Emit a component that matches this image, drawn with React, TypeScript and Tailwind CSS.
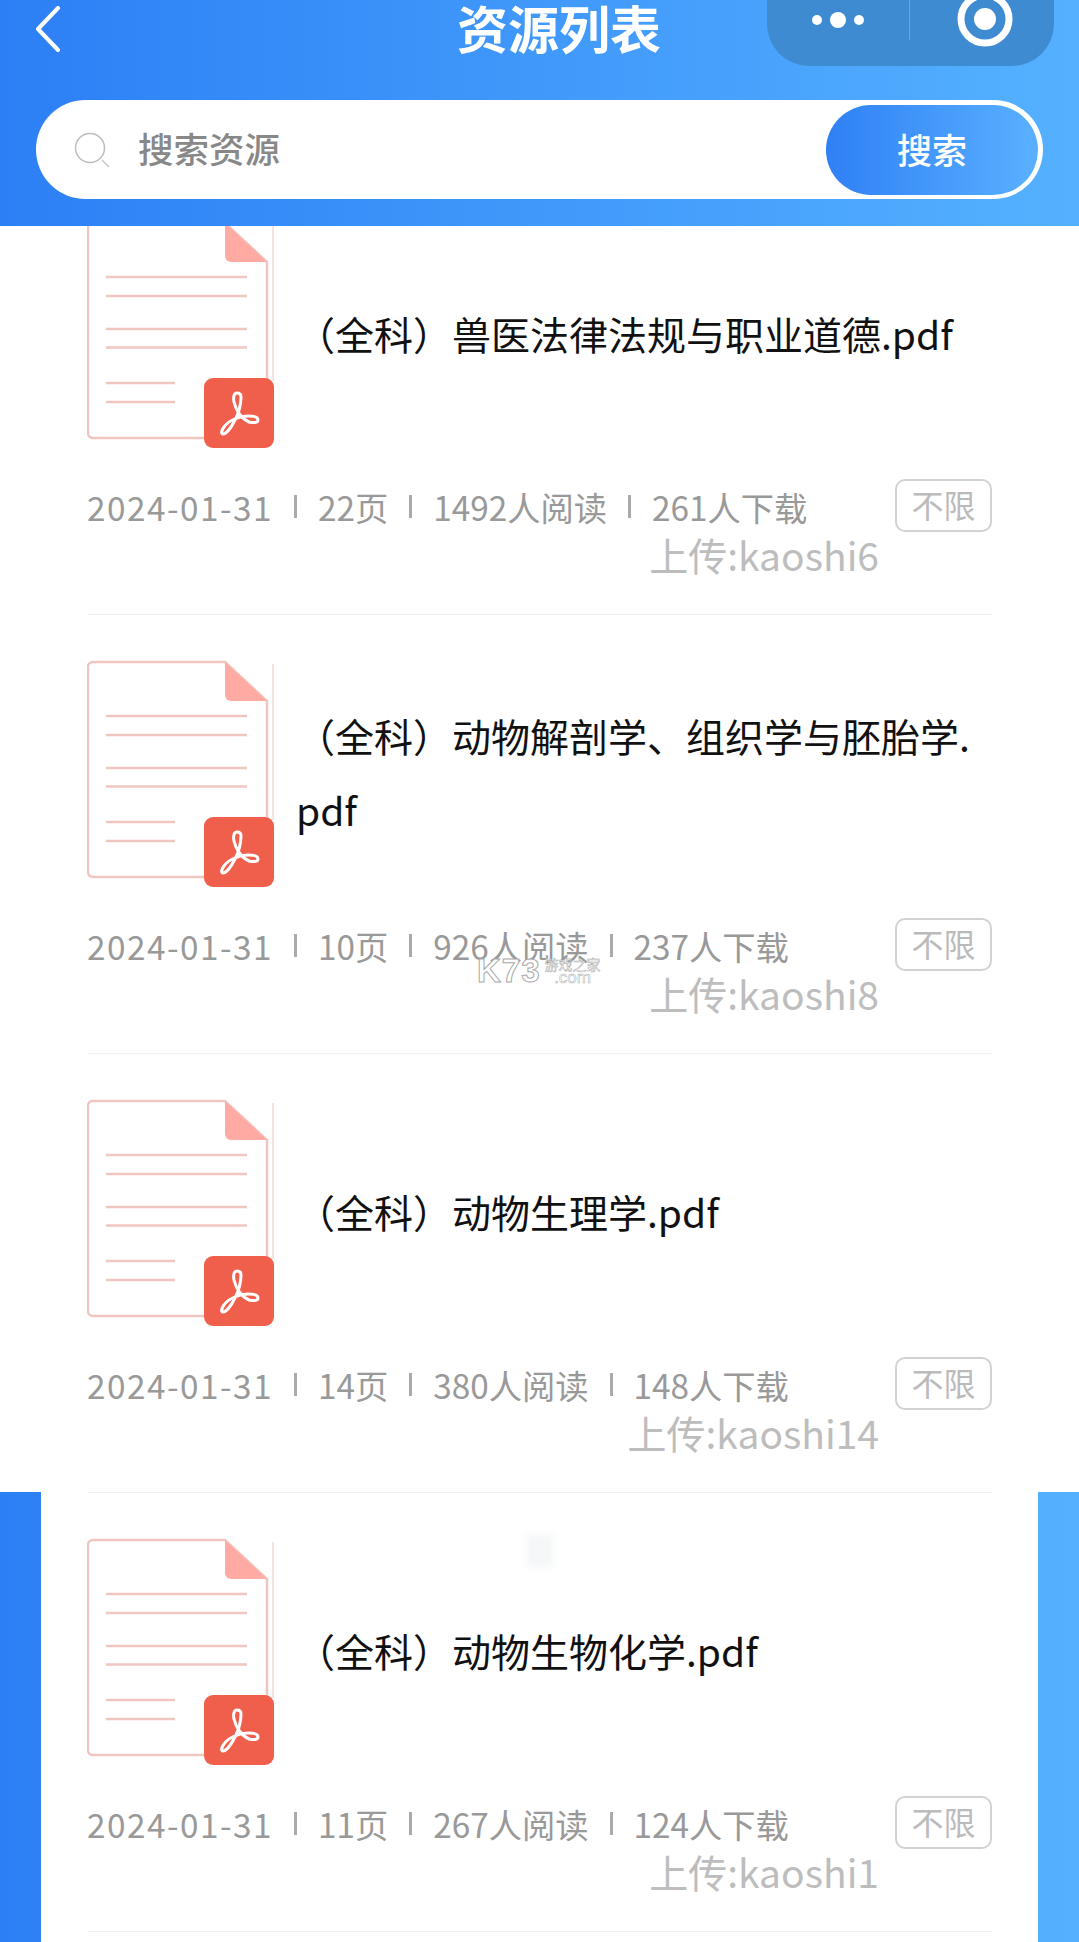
const FONT = "font-['Noto_Sans_CJK_SC','Noto_Sans',sans-serif]"

const resources = [
  { title: '（全科）兽医法律法规与职业道德.pdf', date: '2024-01-31', pages: '22页', reads: '1492人阅读', downloads: '261人下载', user: '上传:kaoshi6' },
  { title: '（全科）动物解剖学、组织学与胚胎学.pdf', date: '2024-01-31', pages: '10页', reads: '926人阅读', downloads: '237人下载', user: '上传:kaoshi8' },
  { title: '（全科）动物生理学.pdf', date: '2024-01-31', pages: '14页', reads: '380人阅读', downloads: '148人下载', user: '上传:kaoshi14' },
  { title: '（全科）动物生物化学.pdf', date: '2024-01-31', pages: '11页', reads: '267人阅读', downloads: '124人下载', user: '上传:kaoshi1' },
]

function PdfIcon() {
  return (
    <svg width="187" height="227" viewBox="0 0 187 227" fill="none" className="shrink-0">
      <path d="M6 2H138L180 41V217H6a5 5 0 0 1-5-5V7a5 5 0 0 1 5-5Z" stroke="#efc6bf" strokeWidth="2.5" fill="#fff" />
      <path d="M138 2L180 41H144a6 6 0 0 1-6-6Z" fill="#ffaaa3" />
      <path d="M186 4V160" stroke="#f3d9d4" strokeWidth="1.5" />
      <g stroke="#efc6c0" strokeWidth="2.5">
        <path d="M19 56H160" />
        <path d="M19 75H160" />
        <path d="M19 108H160" />
        <path d="M19 126.500H160" />
        <path d="M19 162H88" />
        <path d="M19 181H88" />
      </g>
      <rect x="117" y="157" width="70" height="70" rx="9" fill="#ef5f4c" />
      <path
        d="M150 172c-3 0-4 4-3 9c2 9 8 17 15 20c4 1 9 1 9-2c0-3-5-4-10-4c-9 0-20 5-24 11c-3 4-3 7-1 7c3 0 8-6 12-14c4-8 6-18 6-23c0-3-2-4-4-4Z"
        stroke="#fff"
        strokeWidth="3"
        strokeLinejoin="round"
      />
    </svg>
  )
}

function Sep() {
  return <span className="w-[3px] h-[23px] bg-[#aaa]" />
}

function ResourceItem({ item }: { item: (typeof resources)[number] }) {
  return (
    <div className="h-[439px] pt-[45px] border-b border-[#f0f0f0]">
      <div className="flex items-center">
        <PdfIcon />
        <div className="ml-[22px] -mt-[4px] flex-1 text-[39px] leading-[74px] text-[#111] break-all">{item.title}</div>
      </div>
      <div className="mt-[31px] flex items-center justify-between">
        <div className="mt-[2px] flex items-center gap-[21px] text-[33.300px] leading-[44px] text-[#999]">
          <span className="tracking-[1.500px]">{item.date}</span>
          <Sep />
          <span>{item.pages}</span>
          <Sep />
          <span>{item.reads}</span>
          <Sep />
          <span>{item.downloads}</span>
        </div>
        <div className="w-[97px] h-[53px] pb-[3px] flex items-center justify-center rounded-[10px] border-2 border-[#d2d2d2] text-[32px] text-[#bbb]">
          不限
        </div>
      </div>
      <div className="mt-[2px] pr-[113px] text-right text-[39px] leading-[40px] text-[#bdbdbd]">{item.user}</div>
    </div>
  )
}

function Header() {
  return (
    <header className="relative z-10 h-[226px] shrink-0 px-[36px] pt-[100px]">
      <svg width="26" height="46" viewBox="0 0 26 46" fill="none" className="absolute left-[35px] top-[6px]">
        <path d="M23 2L3 23L23 44" stroke="#fff" strokeWidth="4" strokeLinecap="round" strokeLinejoin="round" />
      </svg>
      <div className="absolute left-[457px] top-0 text-[51px] leading-[54px] font-bold text-white">资源列表</div>
      <div className="absolute left-[767px] top-0 w-[287px] h-[66px] rounded-b-[42px] bg-[#3f8bd2] flex items-start">
        <div className="w-[143px] h-[40px] flex items-center justify-center gap-[8px] border-r border-[#6aa6dc]">
          <span className="w-[10px] h-[10px] rounded-full bg-white" />
          <span className="w-[16px] h-[16px] rounded-full bg-white" />
          <span className="w-[10px] h-[10px] rounded-full bg-white" />
        </div>
        <div className="flex-1 flex justify-center pl-[6px]">
          <svg width="56" height="47" viewBox="0 0 56 47">
            <circle cx="28" cy="19" r="24" fill="none" stroke="#fff" strokeWidth="7" />
            <circle cx="28" cy="19" r="11" fill="#fff" />
          </svg>
        </div>
      </div>
      <div className="h-[99px] rounded-full bg-white flex items-center justify-between pl-[38px] pr-[5px]">
        <div className="flex items-center">
          <svg width="38" height="36" viewBox="0 0 38 36" fill="none">
            <circle cx="16" cy="16" r="14.500" stroke="#bdbdbd" strokeWidth="1.500" />
            <path d="M28 28L35 35" stroke="#c8c8c8" strokeWidth="1.500" />
          </svg>
          <span className="ml-[26px] -mt-[4px] text-[35.500px] font-medium text-[#888]">搜索资源</span>
        </div>
        <div className="w-[212px] h-[90px] rounded-full bg-gradient-to-r from-[#2f80f5] to-[#5ab0ff] flex items-center justify-center text-[35px] font-medium text-white">
          搜索
        </div>
      </div>
    </header>
  )
}

export default function App() {
  return (
    <div className={`relative w-[1079px] h-[1942px] overflow-hidden flex flex-col bg-gradient-to-r from-[#2d7ff5] to-[#55b1ff] ${FONT}`}>
      <Header />
      <div className="h-[1266px] shrink-0 overflow-hidden bg-white px-[87px]">
        <div className="-mt-[50px]">
          {resources.slice(0, 3).map((r) => (
            <ResourceItem key={r.user} item={r} />
          ))}
        </div>
      </div>
      <div className="relative flex-1 mx-[41px] px-[46px] bg-white">
        <div className="border-t border-[#f0f0f0]">
          <ResourceItem item={resources[3]} />
        </div>
        <div className="absolute left-[485px] top-[42px] w-[28px] h-[34px] bg-[#f6f7f8] blur-[3px]" />
      </div>
      {/* k73 watermark */}
      <div className="absolute left-[477px] top-[956px] flex items-center gap-[4px] font-['Liberation_Sans',sans-serif]">
        <span className="text-[33px] leading-[30px] font-bold tracking-[1px] text-white [-webkit-text-stroke:1px_#a8a8a8]">K73</span>
        <span className="flex flex-col items-center text-[17px] leading-[14px] text-white [-webkit-text-stroke:0.5px_#aaa]">
          <span className="text-[14px] font-['Noto_Sans_CJK_SC',sans-serif]">游戏之家</span>
          <span>.com</span>
        </span>
      </div>
    </div>
  )
}
